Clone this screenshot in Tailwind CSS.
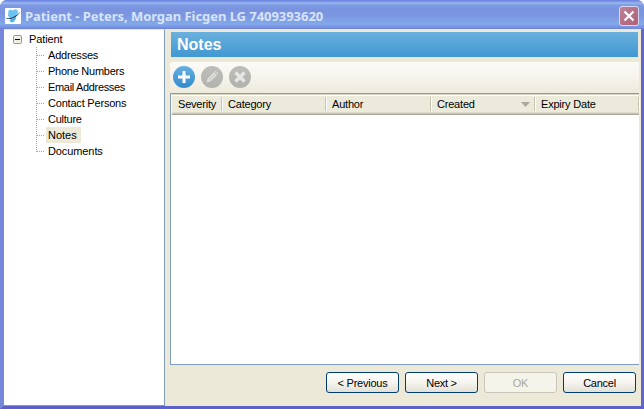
<!DOCTYPE html>
<html lang="en">
<head>
<meta charset="utf-8">
<title>Patient</title>
<script src="https://cdn.jsdelivr.net/npm/@tailwindcss/browser@4"></script>
</head>
<body class="w-[644px] h-[409px] overflow-hidden bg-white font-['Liberation_Sans',Arial,sans-serif] text-[11px] leading-4 text-black">
<div class="w-[644px] h-[409px] flex flex-col overflow-hidden rounded-t-[7px] bg-[#6f7fdc]">
  <header class="h-[29px] shrink-0 flex items-center pl-[5px] pr-[5px] pt-[2px] bg-[linear-gradient(180deg,#6b7fe0_0px,#7f9fe8_2px,#a0b9f0_3px,#7e9be4_5px,#7b93df_9px,#7b97e1_16px,#82a9e9_24px,#7d9ce6_26px,#6f82d8_29px)]">
    <svg class="w-4 h-4 shrink-0" viewBox="0 0 16 16">
      <rect width="16" height="16" rx="1" fill="#fff"/>
      <path d="M3.500 2.500 6 1.500 8 2.500 10 1.200 12.500 2 13 5 10.500 8 5 10 3 8Z" fill="#6cc4f3"/>
      <path d="M4.500 12 11.500 8.500 10.500 11.500 8 14.500 5.500 14Z" fill="#4fb2ea"/>
      <path d="M.3 9.500C3 11.500 10 9.500 15.700 3.500 12 9.500 4 13.500 .3 9.500Z" fill="#16324f"/>
    </svg>
    <h1 class="ml-[4px] flex-1 whitespace-pre font-['Noto_Sans',sans-serif] font-bold text-[13px] leading-4 tracking-[-0.05px] text-[#d8e4f8]">Patient - Peters, Morgan Ficgen LG 7409393620</h1>
    <button class="w-[20px] h-[20px] rounded-[3px] border border-[#d5d8f0] bg-linear-to-br from-[#bd8198] to-[#ad5f74] flex items-center justify-center">
      <svg class="w-[12px] h-[12px]" viewBox="0 0 12 12"><path d="M1.500 1.500 10.500 10.500M10.500 1.500 1.500 10.500" stroke="#fff" stroke-width="2.200"/></svg>
    </button>
  </header>
  <div class="flex-1 min-h-0 flex border-l-4 border-r-[3px] border-b-[3px] border-l-[#7588dc] border-r-[#5f67cc] border-b-[#5b61c8] bg-[#ece9d8]">
    <nav class="w-[161px] shrink-0 bg-white border-r border-b border-t border-[#7f9db9] border-t-[#e4e8ee] pt-[1px]">
      <div class="h-4 flex items-center pl-[9px]">
        <svg class="w-[9px] h-[9px]" viewBox="0 0 9 9"><rect x=".5" y=".5" width="8" height="8" rx="1" fill="#f1eee6" stroke="#8497ab"/><path d="M2 4.500h5" stroke="#000"/></svg>
        <span class="ml-[7px] tracking-[-0.1px]">Patient</span>
      </div>
      <div class="flex">
        <svg class="ml-[32px] w-[9px] h-[112px] shrink-0" viewBox="0 0 9 112">
          <path d="M.5 0V105M1 8.500h8M1 24.500h8M1 40.500h8M1 56.500h8M1 72.500h8M1 88.500h8M1 104.500h8" stroke="#aca899" stroke-dasharray="1 1" fill="none"/>
        </svg>
        <ul class="ml-[1px] flex flex-col items-start whitespace-nowrap *:h-4 *:px-[2px]">
          <li class="tracking-[-0.2px]">Addresses</li>
          <li class="tracking-[-0.25px]">Phone Numbers</li>
          <li class="tracking-[-0.33px]">Email Addresses</li>
          <li class="tracking-[-0.2px]">Contact Persons</li>
          <li class="tracking-[-0.25px]">Culture</li>
          <li class="w-[35px] bg-[#ece9d8]">Notes</li>
          <li class="tracking-[-0.1px]">Documents</li>
        </ul>
      </div>
    </nav>
    <main class="flex-1 min-w-0 flex flex-col pl-[5px] pt-[3px]">
      <h2 class="ml-[1px] mr-[3px] h-[25px] shrink-0 pl-[6px] bg-linear-to-b from-[#6ab0de] to-[#3f98d2] text-white font-bold text-[16px] leading-[25px]">Notes</h2>
      <div class="mt-[5px] mr-[2px] h-[31px] shrink-0 flex items-center gap-[6px] pl-[3px] pb-px rounded-tl-[2px] bg-linear-to-b from-[#fcfbf8] via-[#f5f3ec] to-[#edeadb]">
        <svg class="w-[22px] h-[22px]" viewBox="0 0 22 22">
          <defs><linearGradient id="b" x2="0" y2="1"><stop stop-color="#67b0e0"/><stop offset="1" stop-color="#2f8bcb"/></linearGradient>
          <linearGradient id="g" x2="0" y2="1"><stop stop-color="#bdbdba"/><stop offset="1" stop-color="#b2b2ae"/></linearGradient></defs>
          <circle cx="11" cy="11" r="11" fill="url(#b)"/><path d="M11 5v12M5 11h12" stroke="#fff" stroke-width="3"/>
        </svg>
        <svg class="w-[22px] h-[22px]" viewBox="0 0 22 22">
          <circle cx="11" cy="11" r="11" fill="url(#g)"/><path d="M5.500 16.500 6.500 12.500 13 6 16 9 9.500 15.500ZM13.700 5.300 14.500 4.700 17.300 7.500 16.700 8.300Z" fill="#dcdcd9"/><path d="M8.500 13.500 13.500 8.500" stroke="#c6c6c3"/>
        </svg>
        <svg class="w-[22px] h-[22px]" viewBox="0 0 22 22">
          <circle cx="11" cy="11" r="11" fill="url(#g)"/><path d="M6.500 6.500l9 9M15.500 6.500l-9 9" stroke="#e6e6e3" stroke-width="3.400"/>
        </svg>
      </div>
      <section class="mr-[2px] h-[272px] shrink-0 bg-white border border-r-0 border-[#7f9dbf]">
        <div class="h-[21px] flex pt-[2px] bg-[#ebeadb] border-l border-l-white border-b border-b-[#aca899] shadow-[inset_0_1px_0_#d8d4c4,inset_0_2px_0_#fff,inset_0_-1px_0_#cbc7b8,inset_0_-2px_0_#dedbcb] tracking-[-0.2px] *:h-[14px] *:mt-px *:leading-[15px] *:pl-[6px] *:border-r *:border-[#c7c5b2] *:shadow-[1px_0_0_#fff]">
          <div class="w-[50px]">Severity</div>
          <div class="w-[104px]">Category</div>
          <div class="w-[105px]">Author</div>
          <div class="w-[104px] flex justify-between">Created<svg class="mr-[4px] mt-[5px] w-[9px] h-[5px]" viewBox="0 0 9 5"><path d="M0 0h9L4.500 5Z" fill="#aca899"/></svg></div>
          <div class="flex-1">Expiry Date</div>
        </div>
      </section>
      <footer class="mt-[7px] mr-[5px] h-[21px] flex justify-end gap-[6px] tracking-[-0.25px] *:w-[73px] *:h-[21px] *:rounded-[3px] *:border *:leading-[18px]">
        <button class="border-[#003c74] bg-linear-to-b from-white via-[#f5f4ef] to-[#e4e0d5]">&lt; Previous</button>
        <button class="border-[#003c74] bg-linear-to-b from-white via-[#f5f4ef] to-[#e4e0d5]">Next &gt;</button>
        <button class="border-[#c9c7ba] bg-[#f5f4ea] text-[#aca899]">OK</button>
        <button class="border-[#003c74] bg-linear-to-b from-white via-[#f5f4ef] to-[#e4e0d5]">Cancel</button>
      </footer>
    </main>
  </div>
</div>
</body>
</html>
